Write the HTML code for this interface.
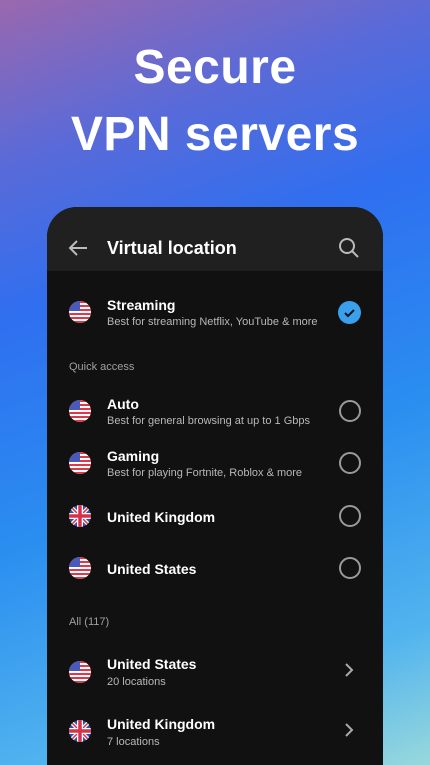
<!DOCTYPE html><html><head><meta charset="utf-8"><style>
*{margin:0;padding:0;box-sizing:border-box}
html{width:430px;height:765px;overflow:hidden}
body{width:430px;height:765px;overflow:hidden;position:relative;font-family:"Liberation Sans",sans-serif;
background:linear-gradient(160deg,#9a68ae 0%,#5a6ad8 18%,#2f6ff0 35%,#2a8ef0 60%,#52b4ee 85%,#98d8dc 100%);}
.t{position:absolute;left:0;width:430px;text-align:center;color:#fff;font-size:48px;font-weight:bold;letter-spacing:0.5px}
.ph{position:absolute;left:47px;top:207px;width:336px;height:558px;background:#111;border-radius:30px 30px 0 0;overflow:hidden}
.hd{height:64px;background:#202020;position:relative}
.hd .ti{position:absolute;left:60px;top:31px;color:#fff;font-size:18px;font-weight:bold}
.n{position:absolute;left:60px;color:#fff;font-size:14px;font-weight:bold}
.s{position:absolute;left:60px;color:#b8b8b8;font-size:11px}
.sec{position:absolute;left:22px;color:#a0a0a0;font-size:11px}
.f{position:absolute;left:22px;width:22px;height:22px}
.rad{position:absolute;left:292px;width:22px;height:22px;border:2px solid #9a9a9a;border-radius:50%}
</style></head><body>
<svg width="0" height="0" style="position:absolute"><defs>
<clipPath id="c"><circle cx="11" cy="11" r="11"/></clipPath>
<symbol id="us" viewBox="0 0 22 22"><g clip-path="url(#c)"><rect width="22" height="22" fill="#fff"/>
<rect y="0" width="22" height="2" fill="#e0384a"/><rect y="4" width="22" height="2" fill="#e0384a"/><rect y="8" width="22" height="2" fill="#e0384a"/><rect y="12" width="22" height="2" fill="#e0384a"/><rect y="16" width="22" height="2" fill="#e0384a"/><rect y="20" width="22" height="2" fill="#e0384a"/>
<rect width="11" height="10" fill="#4a5ab8"/></g></symbol>
<symbol id="uk" viewBox="0 0 22 22"><g clip-path="url(#c)"><rect width="22" height="22" fill="#2f4fa8"/>
<path d="M0 0L22 22M22 0L0 22" stroke="#fff" stroke-width="4"/><path d="M0 0L22 22M22 0L0 22" stroke="#d8304a" stroke-width="1.5"/>
<path d="M11 0V22M0 11H22" stroke="#fff" stroke-width="6"/><path d="M11 0V22M0 11H22" stroke="#d8304a" stroke-width="3.5"/></g></symbol>
</defs></svg>
<div class="t" style="top:40px">Secure</div>
<div class="t" style="top:107px">VPN servers</div>
<div class="ph">
<div class="hd">
<svg style="position:absolute;left:20px;top:32px" width="22" height="18" viewBox="0 0 22 18"><path d="M20 9H3M10 2L3 9L10 16" stroke="#bbb" stroke-width="2" fill="none"/></svg>
<div class="ti">Virtual location</div>
<svg style="position:absolute;left:291px;top:30px" width="22" height="22" viewBox="0 0 22 22"><circle cx="9" cy="9" r="7" stroke="#bbb" stroke-width="2" fill="none"/><path d="M14 14L20 20" stroke="#bbb" stroke-width="2"/></svg>
</div>
<svg class="f" style="top:94px"><use href="#us"/></svg>
<div class="n" style="top:90px">Streaming</div><div class="s" style="top:109px">Best for streaming Netflix, YouTube &amp; more</div>
<svg style="position:absolute;left:291px;top:94px" width="23" height="23" viewBox="0 0 23 23"><circle cx="11.5" cy="11.5" r="11.5" fill="#3aa0ee"/><path d="M7 12l3 3 6-6" stroke="#111" stroke-width="2" fill="none"/></svg>
<div class="sec" style="top:154px">Quick access</div>
<svg class="f" style="top:193px"><use href="#us"/></svg>
<div class="n" style="top:189px">Auto</div><div class="s" style="top:208px">Best for general browsing at up to 1 Gbps</div><div class="rad" style="top:193px"></div>
<svg class="f" style="top:245px"><use href="#us"/></svg>
<div class="n" style="top:241px">Gaming</div><div class="s" style="top:260px">Best for playing Fortnite, Roblox &amp; more</div><div class="rad" style="top:245px"></div>
<svg class="f" style="top:298px"><use href="#uk"/></svg>
<div class="n" style="top:302px">United Kingdom</div><div class="rad" style="top:298px"></div>
<svg class="f" style="top:350px"><use href="#us"/></svg>
<div class="n" style="top:354px">United States</div><div class="rad" style="top:350px"></div>
<div class="sec" style="top:409px">All (117)</div>
<svg class="f" style="top:454px"><use href="#us"/></svg>
<div class="n" style="top:449px">United States</div><div class="s" style="top:469px">20 locations</div>
<svg style="position:absolute;left:297px;top:455px" width="10" height="16" viewBox="0 0 10 16"><path d="M2 2l6 6-6 6" stroke="#aaa" stroke-width="2" fill="none"/></svg>
<svg class="f" style="top:513px"><use href="#uk"/></svg>
<div class="n" style="top:509px">United Kingdom</div><div class="s" style="top:529px">7 locations</div>
<svg style="position:absolute;left:297px;top:515px" width="10" height="16" viewBox="0 0 10 16"><path d="M2 2l6 6-6 6" stroke="#aaa" stroke-width="2" fill="none"/></svg>
</div>
</body></html>
